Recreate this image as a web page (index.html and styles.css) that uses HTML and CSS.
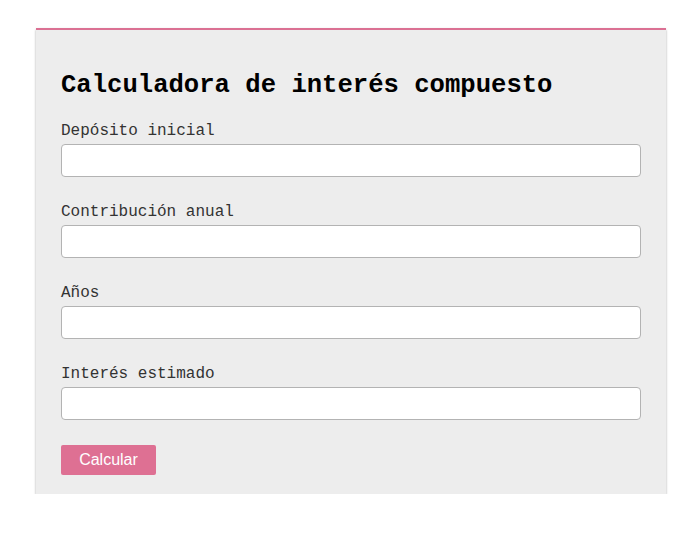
FILE: index.html
```html
<!DOCTYPE html>
<html lang="es">
<head>
<meta charset="utf-8">
<title>Calculadora de interés compuesto</title>
<link rel="stylesheet" href="styles.css">
</head>
<body>
<div class="card">
  <h1 class="title">Calculadora de interés compuesto</h1>
  <form class="form">
    <div class="field">
      <label class="label" for="d">Depósito inicial</label>
      <input class="input" id="d" type="text">
    </div>
    <div class="field">
      <label class="label" for="c">Contribución anual</label>
      <input class="input" id="c" type="text">
    </div>
    <div class="field">
      <label class="label" for="a">Años</label>
      <input class="input" id="a" type="text">
    </div>
    <div class="field">
      <label class="label" for="i">Interés estimado</label>
      <input class="input" id="i" type="text">
    </div>
    <div class="actions">
      <button class="btn" type="button">Calcular</button>
    </div>
  </form>
</div>
</body>
</html>
```
FILE: styles.css
```css
html, body {
  margin: 0;
  padding: 0;
  background: #fff;
}
body {
  padding-top: 28px;
  font-family: "Courier New", "Liberation Mono", monospace;
}
.card {
  margin-left: 36px;
  width: 630px;
  box-sizing: border-box;
  background: #ededed;
  border-top: 2px solid #db7093;
  box-shadow: 0 1px 3px rgba(0,0,0,0.12), 0 2px 2px rgba(0,0,0,0.22);
  padding: 41px 25px 19px;
}
.title {
  margin: 0 0 22px;
  font-size: 25.6px;
  font-weight: bold;
  color: #000;
  line-height: 29px;
}
.form {
  display: flex;
  flex-direction: column;
  gap: 26px;
}
.field {
  display: flex;
  flex-direction: column;
  gap: 4px;
}
.label {
  font-size: 16px;
  line-height: 18px;
  color: #333;
}
.input {
  box-sizing: border-box;
  width: 580px;
  height: 33px;
  margin: 0;
  border: 1px solid #b3b3b3;
  border-radius: 4px;
  background: #fff;
  font: 16px "Liberation Sans", Arial, sans-serif;
  padding: 0 8px;
}
.actions {
  margin-top: -1px;
}
.btn {
  display: block;
  width: 95px;
  height: 30px;
  margin: 0;
  border: none;
  border-radius: 2px;
  background: #de7093;
  color: #fff;
  font: 16px "Liberation Sans", Arial, sans-serif;
  padding: 0;
}
```
